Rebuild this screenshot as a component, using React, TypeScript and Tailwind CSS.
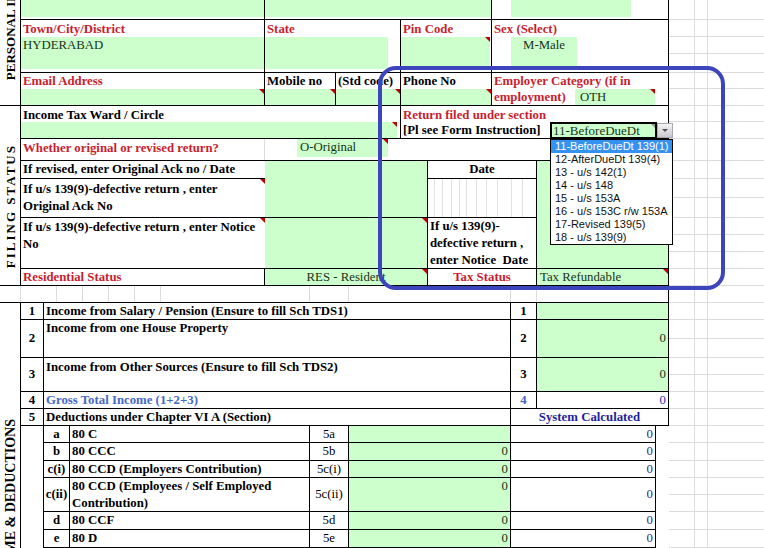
import React from "react";

const cellB = "border-r border-b border-black";
const red = "text-[#c81e2e]";
const green = "bg-[#ccffcc]";
const ink = "text-[#173417]";

// comment marker in the top-right corner of a cell
const Mark = () => (
  <span className="absolute right-0 top-0 h-0 w-0 border-l-[5px] border-t-[5px] border-l-transparent border-t-[#c00000]" />
);

const returnSections = [
  "11-BeforeDueDt 139(1)",
  "12-AfterDueDt 139(4)",
  "13 - u/s 142(1)",
  "14 - u/s 148",
  "15 - u/s 153A",
  "16 - u/s 153C r/w 153A",
  "17-Revised 139(5)",
  "18 - u/s 139(9)",
];

const deductions = [
  { k: "a", label: "80 C", code: "5a", own: "" },
  { k: "b", label: "80 CCC", code: "5b", own: "0" },
  { k: "c(i)", label: "80 CCD (Employers Contribution)", code: "5c(i)", own: "0" },
  { k: "c(ii)", label: "80 CCD (Employees / Self Employed Contribution)", code: "5c(ii)", own: "0" },
  { k: "d", label: "80 CCF", code: "5d", own: "0" },
  { k: "e", label: "80 D", code: "5e", own: "0" },
];

const deductionRows = [
  "row-[16/17]",
  "row-[17/18]",
  "row-[18/19]",
  "row-[19/20]",
  "row-[20/21]",
  "row-[21/22]",
];

// sheet gridlines to the right of the form
const sideRows = [
  "h-[20px]", "h-[17px]", "h-[17px]", "h-[19px]", "h-[16px]", "h-[17px]", "h-[16px]", "h-[17px]",
  "h-[22px]", "h-[18px]", "h-[19px]", "h-[20px]", "h-[17px]", "h-[17px]", "h-[17px]", "h-[17px]",
  "h-[17px]", "h-[17px]", "h-[19px]", "h-[19px]", "h-[17px]", "h-[17px]", "h-[17px]", "h-[17px]",
  "h-[17px]", "h-[18px]", "h-[17px]", "h-[17px]", "h-[17px]", "h-[18px]", "h-[18px]",
];

const spacerCols = ["w-[21px]", "w-[36px]", "w-[26px]", "w-[26px]", "w-[26px]", "w-[26px]", "w-[149px]", "w-[39px]", "w-[162px]", "w-[26px]"];
const dateGrid = ["w-[7px]", "w-[8px]", "w-[9px]", "w-[8px]", "w-[7px]", "w-[10px]", "w-[10px]", "w-[11px]", "w-[14px]", "w-[11px]"];

function Dropdown() {
  return (
    <div className={`relative z-10 col-[15/16] row-[4/5] h-[17px] w-[107px] self-end border-2 border-black ${green} ${ink} pl-[1px] text-[13px] leading-[13px]`}>
      11-BeforeDueDt
      <span className="absolute right-0 top-0 h-0 w-0 border-l-[4px] border-t-[4px] border-l-transparent border-t-[#9a9a9a]" />
      <div className="absolute left-[105px] top-[-1px] flex h-[15px] w-[16px] items-center justify-center border border-[#a8a8b0] bg-gradient-to-b from-[#f4f4f4] to-[#c9c9d2]">
        <span className="h-0 w-0 border-x-[3px] border-t-[3px] border-x-transparent border-t-[#555]" />
      </div>
      <ul className="absolute left-[-2px] top-[15px] w-[123px] border border-black bg-white font-['Liberation_Sans',Arial,sans-serif] text-[11px] leading-[13px] text-[#111]">
        {returnSections.map((s, i) => (
          <li key={s} className={i === 0 ? "bg-[#3592f0] pl-[4px] text-white" : "pl-[4px]"}>
            {s}
          </li>
        ))}
      </ul>
    </div>
  );
}

export default function App() {
  return (
    <div className="relative h-[548px] w-[764px] overflow-hidden bg-white font-['Liberation_Serif','Times_New_Roman',serif] text-[12.8px] leading-[17px] text-black">
      <div className="grid grid-cols-[21px_23px_26px_195px_32px_13px_26px_13px_52px_27px_64px_19px_26px_13px_106px_13px_26px_13px_56px] grid-rows-[20px_53px_33px_33px_22px_18px_39px_51px_17px_17px_17px_38px_34px_17px_17px_17px_18px_17px_34px_18px_18px]">
        {/* section captions */}
        <div className={`col-[1/2] row-[1/4] flex flex-col items-center justify-end overflow-hidden pb-[25px] ${cellB}`}>
          <span className="rotate-180 whitespace-nowrap text-[13px] font-bold [writing-mode:vertical-rl]">PERSONAL INFORMATION</span>
        </div>
        <div className={`col-[1/2] row-[4/10] flex flex-col items-center justify-end overflow-hidden pb-[17px] ${cellB}`}>
          <span className="rotate-180 whitespace-nowrap text-[13px] font-bold tracking-[2px] [writing-mode:vertical-rl]">FILING STATUS</span>
        </div>
        <div className="col-[1/2] row-[11/22] flex flex-col items-center overflow-hidden border-r border-black pt-[116px]">
          <span className="rotate-180 whitespace-nowrap text-[14px] font-bold [writing-mode:vertical-rl]">INCOME &amp; DEDUCTIONS</span>
        </div>

        {/* personal info */}
        <div className={`col-[2/5] row-[1/2] ${cellB}`}>
          <div className={`h-[17px] ${green}`} />
        </div>
        <div className={`col-[5/12] row-[1/2] ${cellB}`}>
          <div className={`h-[17px] ${green}`} />
        </div>
        <div className={`col-[12/17] row-[1/2] flex ${cellB}`}>
          <div className="w-[19px]" />
          <div className={`h-[17px] w-[120px] ${green}`} />
        </div>

        <div className={`col-[2/5] row-[2/3] ${cellB}`}>
          <div className={`h-[17px] px-[2px] pt-[1px] font-bold ${red}`}>Town/City/District</div>
          <div className={`h-[32px] px-[2px] ${green} ${ink}`}>HYDERABAD</div>
        </div>
        <div className={`col-[5/10] row-[2/3] ${cellB}`}>
          <div className={`h-[17px] px-[2px] pt-[1px] font-bold ${red}`}>State</div>
          <div className={`h-[32px] w-[123px] ${green}`} />
        </div>
        <div className={`col-[10/12] row-[2/3] ${cellB}`}>
          <div className={`h-[17px] px-[2px] pt-[1px] font-bold ${red}`}>Pin Code</div>
          <div className={`relative h-[32px] w-[89px] ${green}`}>
            <Mark />
          </div>
        </div>
        <div className={`col-[12/17] row-[2/3] ${cellB}`}>
          <div className={`h-[17px] px-[2px] pt-[1px] font-bold ${red}`}>Sex (Select)</div>
          <div className="flex">
            <div className="w-[19px]" />
            <div className={`h-[32px] w-[66px] text-center ${green} ${ink}`}>M-Male</div>
          </div>
        </div>

        <div className={`col-[2/5] row-[3/4] ${cellB}`}>
          <div className={`h-[16px] px-[2px] font-bold ${red}`}>Email Address</div>
          <div className={`relative h-[16px] ${green}`}>
            <Mark />
          </div>
        </div>
        <div className={`col-[5/8] row-[3/4] ${cellB}`}>
          <div className="h-[16px] px-[2px] font-bold">Mobile no</div>
          <div className={`relative h-[16px] ${green}`}>
            <Mark />
          </div>
        </div>
        <div className={`col-[8/10] row-[3/4] ${cellB}`}>
          <div className="h-[16px] whitespace-nowrap px-[2px] font-bold">(Std code)</div>
          <div className={`relative h-[16px] ${green}`}>
            <Mark />
          </div>
        </div>
        <div className={`col-[10/12] row-[3/4] ${cellB}`}>
          <div className="h-[16px] px-[2px] font-bold">Phone No</div>
          <div className={`relative h-[16px] ${green}`}>
            <Mark />
          </div>
        </div>
        <div className={`col-[12/17] row-[3/4] ${cellB}`}>
          <div className={`h-[16px] px-[2px] font-bold ${red}`}>Employer Category (if in</div>
          <div className="flex h-[16px]">
            <div className={`w-[83px] px-[2px] font-bold ${red}`}>employment)</div>
            <div className={`relative w-[80px] pl-[5px] ${green} ${ink}`}>
              OTH
              <Mark />
            </div>
          </div>
        </div>

        {/* filing status */}
        <div className={`col-[2/10] row-[4/5] ${cellB}`}>
          <div className="h-[16px] px-[2px] pt-[1px] font-bold">Income Tax Ward / Circle</div>
          <div className={`relative h-[16px] w-[376px] ${green}`}>
            <Mark />
          </div>
        </div>
        <div className={`col-[10/17] row-[4/5] ${cellB}`}>
          <div className={`h-[16px] px-[2px] pt-[1px] font-bold ${red}`}>Return filed under section</div>
          <div className="h-[16px] px-[2px] font-bold">[Pl see Form Instruction]</div>
        </div>

        <div className={`col-[2/17] row-[5/6] flex ${cellB}`}>
          <div className={`w-[244px] border-r border-[#dcdcdc] px-[2px] pt-[1px] font-bold ${red}`}>
            Whether original or revised return?
          </div>
          <div className="w-[32px]" />
          <div className={`relative h-[18px] w-[91px] pl-[3px] ${green} ${ink}`}>
            O-Original
            <Mark />
          </div>
        </div>

        <div className="col-[2/5] row-[6/7] border-b border-black px-[2px] font-bold">
          If revised, enter Original Ack no / Date
        </div>
        <div className={`col-[5/11] row-[6/8] ${green} ${cellB}`} />
        <div className={`col-[11/14] row-[6/7] text-center font-bold ${cellB}`}>Date</div>
        <div className={`col-[14/17] row-[6/9] ${green} ${cellB}`} />

        <div className="relative col-[2/5] row-[7/8] border-b border-black px-[2px] pt-[2px] font-bold">
          If u/s 139(9)-defective return , enter
          <br />
          Original Ack No
          <Mark />
        </div>
        <div className={`col-[11/14] row-[7/8] flex ${cellB}`}>
          {dateGrid.map((w, i) => (
            <div key={i} className={`${w} border-r border-[#e2e2e2]`} />
          ))}
        </div>

        <div className="relative col-[2/5] row-[8/9] border-b border-black px-[2px] pt-[1px] font-bold">
          If u/s 139(9)-defective return , enter Notice
          <br />
          No
          <Mark />
        </div>
        <div className={`relative col-[5/11] row-[8/9] ${green} ${cellB}`}>
          <Mark />
        </div>
        <div className={`col-[11/14] row-[8/9] px-[2px] font-bold ${cellB}`}>
          If u/s 139(9)-
          <br />
          defective return ,
          <br />
          enter Notice&nbsp; Date
        </div>

        <div className={`col-[2/5] row-[9/10] px-[2px] font-bold ${red} ${cellB}`}>Residential Status</div>
        <div className={`relative col-[5/11] row-[9/10] text-center ${green} ${ink} ${cellB}`}>
          RES - Resident
          <Mark />
        </div>
        <div className={`col-[11/14] row-[9/10] text-center font-bold ${red} ${cellB}`}>Tax Status</div>
        <div className={`relative col-[14/17] row-[9/10] pl-[3px] ${green} ${ink} ${cellB}`}>
          Tax Refundable
          <Mark />
        </div>

        <Dropdown />

        {/* blank sheet row */}
        <div className="col-[1/17] row-[10/11] flex border-b border-black">
          {spacerCols.map((w, i) => (
            <div key={i} className={`${w} border-r border-[#dcdcdc]`} />
          ))}
          <div className="flex-1 border-r border-black" />
        </div>

        {/* income */}
        <div className={`col-[2/3] row-[11/12] text-center font-bold ${cellB}`}>1</div>
        <div className={`col-[3/13] row-[11/12] px-[2px] font-bold ${cellB}`}>
          Income from Salary / Pension (Ensure to fill Sch TDS1)
        </div>
        <div className={`col-[13/14] row-[11/12] text-center font-bold ${cellB}`}>1</div>
        <div className={`col-[14/17] row-[11/12] ${green} ${cellB}`} />

        <div className={`col-[2/3] row-[12/13] flex items-center justify-center font-bold ${cellB}`}>2</div>
        <div className={`col-[3/13] row-[12/13] px-[2px] font-bold ${cellB}`}>Income from one House Property</div>
        <div className={`col-[13/14] row-[12/13] flex items-center justify-center font-bold ${cellB}`}>2</div>
        <div className={`col-[14/17] row-[12/13] flex items-center justify-end pr-[2px] ${green} ${ink} ${cellB}`}>0</div>

        <div className={`col-[2/3] row-[13/14] flex items-center justify-center font-bold ${cellB}`}>3</div>
        <div className={`col-[3/13] row-[13/14] px-[2px] pt-[1px] font-bold ${cellB}`}>
          Income from Other Sources (Ensure to fill Sch TDS2)
        </div>
        <div className={`col-[13/14] row-[13/14] flex items-center justify-center font-bold ${cellB}`}>3</div>
        <div className={`col-[14/17] row-[13/14] flex items-center justify-end pr-[2px] ${green} ${ink} ${cellB}`}>0</div>

        <div className={`col-[2/3] row-[14/15] text-center font-bold ${cellB}`}>4</div>
        <div className={`col-[3/13] row-[14/15] px-[2px] font-bold text-[#4468c6] ${cellB}`}>Gross Total Income (1+2+3)</div>
        <div className={`col-[13/14] row-[14/15] text-center font-bold text-[#4468c6] ${cellB}`}>4</div>
        <div className={`col-[14/17] row-[14/15] pr-[2px] text-right text-[#2c2c9c] ${cellB}`}>0</div>

        <div className={`col-[2/3] row-[15/16] text-center font-bold ${cellB}`}>5</div>
        <div className={`col-[3/13] row-[15/16] px-[2px] font-bold ${cellB}`}>Deductions under Chapter VI A (Section)</div>
        <div className={`col-[13/17] row-[15/16] text-center font-bold text-[#1f1f9c] ${cellB}`}>System Calculated</div>

        {/* deductions */}
        <div className="col-[2/3] row-[16/22] border-r border-black" />
        {deductions.map((d, i) => (
          <React.Fragment key={d.k}>
            <div className={`col-[3/4] ${deductionRows[i]} flex items-center justify-center font-bold ${cellB}`}>{d.k}</div>
            <div className={`col-[4/7] ${deductionRows[i]} px-[2px] font-bold ${cellB}`}>{d.label}</div>
            <div className={`col-[7/9] ${deductionRows[i]} flex items-center justify-center ${cellB}`}>{d.code}</div>
            <div className={`col-[9/13] ${deductionRows[i]} pr-[2px] text-right ${green} ${ink} ${cellB}`}>{d.own}</div>
            <div className={`col-[13/16] ${deductionRows[i]} flex items-center justify-end pr-[2px] text-[#2c2c9c] ${cellB}`}>0</div>
          </React.Fragment>
        ))}

        {/* sheet beyond the form */}
        <div className="col-[17/20] row-[1/22] flex flex-col">
          {sideRows.map((h, i) => (
            <div key={i} className={`flex ${h} shrink-0 border-b border-[#dcdcdc]`}>
              <div className="w-[26px] border-r border-[#dcdcdc]" />
              <div className="w-[13px] border-r border-[#dcdcdc]" />
            </div>
          ))}
        </div>
      </div>

      {/* hand-drawn highlight */}
      <div className="pointer-events-none absolute left-[378px] top-[66px] h-[224px] w-[347px] rounded-[18px] border-[4px] border-[#3d45bd]" />
    </div>
  );
}
